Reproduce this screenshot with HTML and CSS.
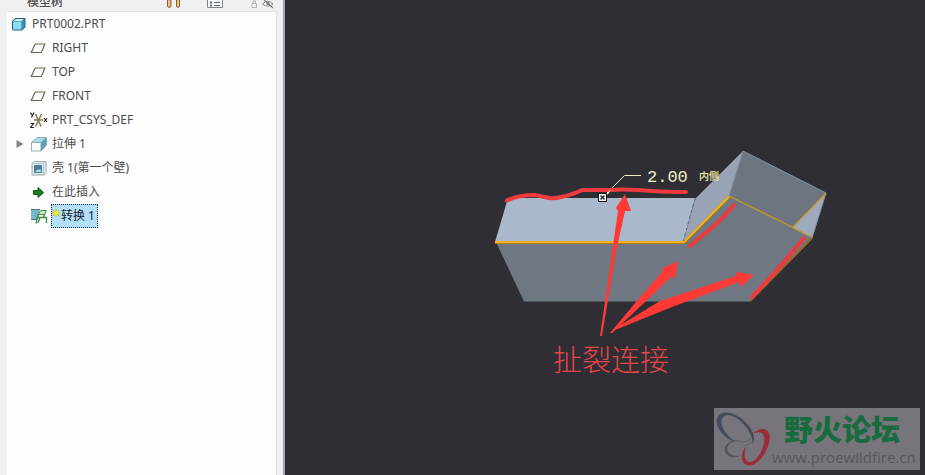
FILE: index.html
```
<!DOCTYPE html>
<html lang="zh-CN">
<head>
  <meta charset="UTF-8">
  <title>PRT0002.PRT</title>
  <meta name="viewport" content="width=device-width,initial-scale=1">
  <link rel="stylesheet" href="styles.css">
</head>
<body>
  <svg class="defs" aria-hidden="true">
    <symbol id="plane" viewBox="0 0 18 18">
      <path d="M5.200 5h9.600l-3.400 8.500H1.200z" fill="#fffdf8" stroke="#756452" stroke-width="1.200"/>
    </symbol>
  </svg>

  <div class="app">
    <!-- Model tree -->
    <aside class="sidebar">
      <header class="toolbar">
        <h1 class="toolbar-title">模型树</h1>
        <div class="tools">
          <button class="tool tool-settings" aria-label="设置">
            <svg width="16" height="9" viewBox="0 0 16 9">
              <path d="M1.500 0v6.500q1.800 2 3.500 0V0zM10.500 0v6.500q1.500 2 3 0V0z" fill="#e5a65c" stroke="#8a6038"/>
              <path d="M3 0v6M12 0v6" stroke="#fbe0b0"/>
            </svg>
          </button>
          <button class="tool tool-show" aria-label="显示">
            <svg width="16" height="9" viewBox="0 0 16 9">
              <path d="M.5 0v7.500h15V0" fill="#f7fafb" stroke="#7d8790"/>
              <path d="M7 2.500h6M7 5.500h6" stroke="#60666c"/>
              <path d="M3 1.500h2v2H3zM3 4.500h2v2H3z" fill="#6a7178"/>
            </svg>
          </button>
          <button class="tool tool-lock" aria-label="锁定">
            <svg width="7" height="9" viewBox="0 0 7 9">
              <path d="M1 3.500h4.500v4H1zM2 3V1h2.500v2" fill="none" stroke="#b4b4b4"/>
            </svg>
          </button>
          <button class="tool" aria-label="隐藏">
            <svg width="12" height="9" viewBox="0 0 12 9">
              <path d="M.5 4Q5.500-1.500 11 4Q5.500 8.500.5 4z" fill="none" stroke="#8b8b8b"/>
              <circle cx="6" cy="3.500" r="1.700" fill="#888"/>
              <path d="M2 0l9 8" stroke="#777" stroke-width="1.200"/>
            </svg>
          </button>
        </div>
      </header>

      <ul class="tree">
        <li class="node root">
          <svg class="icon" viewBox="0 0 18 18">
            <path d="M2.500 6l3-2.500h9.500v8.500l-3 3H3.500q-1 0-1-1z" fill="#2c7ba3" stroke="#245d7c"/>
            <path d="M3 6.500h8.500v8H3z" fill="#8bddf2"/>
            <path d="M3.500 6l2.500-2h8L11.500 6z" fill="#c9f2fb"/>
            <path d="M12 6.500l2.500-2.500v8L12 14.500z" fill="#3b91b9"/>
          </svg>
          <span class="name">PRT0002.PRT</span>
        </li>
        <li class="node">
          <svg class="icon"><use href="#plane"/></svg>
          <span class="name">RIGHT</span>
        </li>
        <li class="node">
          <svg class="icon"><use href="#plane"/></svg>
          <span class="name">TOP</span>
        </li>
        <li class="node">
          <svg class="icon"><use href="#plane"/></svg>
          <span class="name">FRONT</span>
        </li>
        <li class="node">
          <svg class="icon" viewBox="0 0 18 18">
            <path d="M4 9h9M5.500 3L11 15.500M11.500 3L5.500 15.500" fill="none" stroke="#866f4a" stroke-width="1.400"/>
            <path d="M.5 1.500l1.800 3M4 1.500L1.500 6.500M14 7l3 4M17 7L14 11M.5 12.500h3l-3 4h3.500" fill="none" stroke="#222" stroke-width="1.200"/>
          </svg>
          <span class="name">PRT_CSYS_DEF</span>
        </li>
        <li class="node">
          <button class="toggle" aria-label="展开">
            <svg width="8" height="10" viewBox="0 0 8 10"><path d="M.5 1L7.500 5L.5 9z" fill="#858585"/></svg>
          </button>
          <svg class="icon" viewBox="0 0 18 18">
            <path d="M1.500 7.500L7 2.500h9.500L11 7.500z" fill="#aadbea"/>
            <path d="M11 7.500l5.500-5V10L11 16z" fill="#5b9fb9"/>
            <path d="M1.500 7.500H11V16H1.500z" fill="#f8fcfd"/>
            <path d="M1.500 16V7.500L7 2.500h9.500V10L11 16zM1.500 7.500H11V16M11 7.500l5.500-5" fill="none" stroke="#7c9dab" stroke-width=".8"/>
          </svg>
          <span class="name">拉伸 1</span>
        </li>
        <li class="node">
          <svg class="icon" viewBox="0 0 18 18">
            <path d="M2 4.500l2-2h12v11l-2 2.500H2z" fill="#dfebef" stroke="#9aaab0"/>
            <path d="M2 4.500h11.500V16M13.500 4.500L16 2.500" fill="none" stroke="#b7c5ca"/>
            <path d="M4.500 6.500h7v7h-7z" fill="#a8dcec" stroke="#54788b"/>
            <path d="M5 7h6v3.500H7.500L5 13z" fill="#417f9b"/>
          </svg>
          <span class="name">壳 1(第一个壁)</span>
        </li>
        <li class="node">
          <svg class="icon" viewBox="0 0 18 18">
            <path d="M3.500 7.500H8V4.500L13.500 9.500L8 14.500v-3H3.500z" fill="#168020" stroke="#075b10"/>
          </svg>
          <span class="name">在此插入</span>
        </li>
        <li class="node">
          <svg class="icon" viewBox="0 0 18 18">
            <path d="M1 2.500h9l-2 10H1z" fill="#76bad0"/>
            <path d="M1 2.500h9M1 12.500h6" stroke="#407e96"/>
            <path d="M8 7.500l3-4h5.500l-2 4z" fill="#c4e9bb" stroke="#428b48"/>
            <path d="M6 10.500h10.500v5.500M8 7.500L6 16.500M10 10.500l-2 5.500M15 7l-2 3.500" fill="none" stroke="#3a8d43" stroke-width="1.300"/>
          </svg>
          <span class="name selected">
            <svg class="spark" viewBox="0 0 8 8"><path d="M4 0v8M0 4h8M1 1l6 6M7 1L1 7" stroke="#c9b800"/><circle cx="4" cy="4" r="2" fill="#fff200"/></svg>转换 1
          </span>
        </li>
      </ul>
    </aside>

    <!-- Graphics window -->
    <main class="viewport">
      <svg class="scene" viewBox="285 0 640 475" preserveAspectRatio="xMinYMin meet">
        <!-- sheet metal body -->
        <path d="M496 242H683L729 196L812 237L750 301.500H524z" fill="#6e7782"/>
        <path d="M508 198H695L683 242H495z" fill="#a9b8ca"/>
        <path d="M695 199L743 151L729 196L683 242z" fill="#98a4b5"/>
        <path d="M743 151L826 193L792 228L729 196z" fill="#6d7580"/>
        <path d="M826 193L812 238L792 228z" fill="#9eabbd"/>
        <path d="M743 151L826 193L812 238M743 151L729 196" fill="none" stroke="#8a929d"/>
        <path d="M695 199L683 242" stroke="#596474" stroke-dasharray="2 4"/>
        <path d="M495 242.500H684L729 197" fill="none" stroke="#b87e08" stroke-width="3"/>
        <path d="M495 242H684L729 196.500" fill="none" stroke="#efb21c" stroke-width="2"/>
        <path d="M729 196L812 237M792 228L826 193" fill="none" stroke="#c99620" stroke-width="1.300"/>
        <path d="M812 238L750 301" stroke="#9b6a24" stroke-width="2"/>

        <!-- thickness dimension -->
        <path d="M607 193L624.500 175.500H641" fill="none" stroke="#eeeac2"/>
        <text class="dim" x="647" y="182">2.00</text>
        <text class="dim-side" x="699" y="180">内侧</text>

        <!-- rip marks -->
        <g fill="none" stroke="#ef3b3f" stroke-width="4" stroke-linecap="round" stroke-linejoin="round">
          <path d="M507 200.500Q518 195 535 195C545 197 552 200 561 197C570 195 576 193 582 190H611C629 188 650 192 686 192"/>
          <path d="M690 246L703 235Q717 225 734 205"/>
          <path d="M804 238L777 270L752 297"/>
        </g>
        <path d="M605 195L611 189L609 193L605 197z" fill="#fff1cf"/>
        <path d="M598.500 193.500h8v8h-8z" fill="#fff" stroke="#111"/>
        <path d="M600.500 195.500l4 4M604.500 195.500l-4 4" stroke="#222" stroke-width="1.400"/>
        <g fill="#ff3a36">
          <path d="M600 336L618 211L616 208L625 194L631 211L625 211L616 252L602 336z"/>
          <path d="M610 333L636 302L663 271L661 269L678 261L675 279L672 276L644 303L612 333z"/>
          <path d="M614 329L660 301L736 276L736 272L754 275L741 287L739 282L672 307L615 330z"/>
        </g>
        <text class="callout" x="553" y="371">扯裂连接</text>
      </svg>

      <div class="watermark">
        <svg class="logo" viewBox="0 0 60 62">
          <path fill="#434d5b" d="M23 34C10 31 1 18 3 10C5 3 14 2 22 6C34 12 46 27 40 37C41 27 31 13 21 8C15 5 9 6 8 11C6 18 14 29 23 34z"/>
          <path fill="#992d3a" d="M39 26C45 20 54 18 57 25C60 33 53 48 46 54C38 61 30 59 29 52C28 47 30 42 33 39C31 46 31 54 37 55C44 55 53 40 52 30C51 23 46 23 39 26z"/>
          <path fill="#54565f" d="M28 33C18 30 11 36 11 42C12 49 20 52 28 48C21 49 15 47 14 42C13 36 20 32 28 33z"/>
          <path fill="none" stroke="#67656c" d="M24 33Q36 36 39 29M32 38Q38 36 42 32"/>
        </svg>
        <div class="brand">
          <span class="brand-name">野火论坛</span>
          <a class="brand-url" href="#">www.proewildfire.cn</a>
        </div>
      </div>
    </main>
  </div>
</body>
</html>
```
FILE: styles.css
```
:root {
  --panel: #f0f0f0;
  --canvas: #2f2e34;
  --text: #4c4c4c;
}
* { box-sizing: border-box; margin: 0; padding: 0; }
body {
  font-family: "Noto Sans", "Noto Sans CJK SC", sans-serif;
  font-size: 12px; color: var(--text); background: var(--canvas);
}
button { border: none; background: none; cursor: pointer; }
svg { display: block; }
.defs { position: absolute; width: 0; height: 0; }
.app { display: flex; min-height: 100vh; }

.sidebar {
  flex: none; width: 285px; padding: 0 6px 0 7px;
  display: flex; flex-direction: column;
  background: var(--panel); border-right: 2px solid #a2a3a8;
}
.toolbar {
  height: 12px; overflow: hidden; padding: 0 3px 3px 20px;
  display: flex; align-items: flex-end; justify-content: space-between;
  border-bottom: 1px solid #dedfe0;
}
.toolbar-title { font-size: 12px; line-height: 12px; font-weight: 500; }
.tools { display: flex; align-items: flex-end; }
.tool { height: 8px; }
.tool-settings { margin-right: 25px; }
.tool-show { margin-right: 28px; }
.tool-lock { margin-right: 4px; }

.tree {
  flex: 1; list-style: none; background: #fdfdfd;
  border-right: 1px solid #e4e4e4;
}
.node {
  display: flex; align-items: center; gap: 3px;
  height: 24px; padding-left: 23px;
}
.node.root { padding-left: 3px; }
.icon { flex: none; width: 18px; height: 18px; }
.name { line-height: 22px; padding: 0 1px; white-space: nowrap; }
.toggle { width: 8px; height: 10px; margin-left: -14px; margin-right: 3px; }
.selected {
  display: flex; align-items: center; color: #222;
  background: #b1e0fa; border: 1px dotted #222; padding: 0 2px 0 0;
}
.spark { width: 8px; height: 8px; margin: 0 1px 6px 0; }

.viewport { flex: 1; min-width: 0; position: relative; background: var(--canvas); }
.scene { width: 100%; }
.dim { font: 17px "Liberation Mono", monospace; fill: #f3efc8; }
.dim-side { font: 500 10px "Noto Sans CJK SC", sans-serif; fill: #f6f1a8; }
.callout { font: 300 29px "Noto Sans CJK SC", sans-serif; fill: #e8454a; }

.watermark {
  position: absolute; right: 5px; bottom: 5px;
  width: 206px; height: 62px; display: flex; background: #77757b;
}
.logo { flex: none; width: 58px; height: 62px; }
.brand { display: flex; flex-direction: column; }
.brand-name {
  padding-left: 12px; color: #176b3e;
  font: 900 29px/40px "Noto Sans CJK SC", sans-serif;
}
.brand-url {
  color: #56575e; text-decoration: none;
  font: 15px/18px "Open Sans", sans-serif;
}
```
